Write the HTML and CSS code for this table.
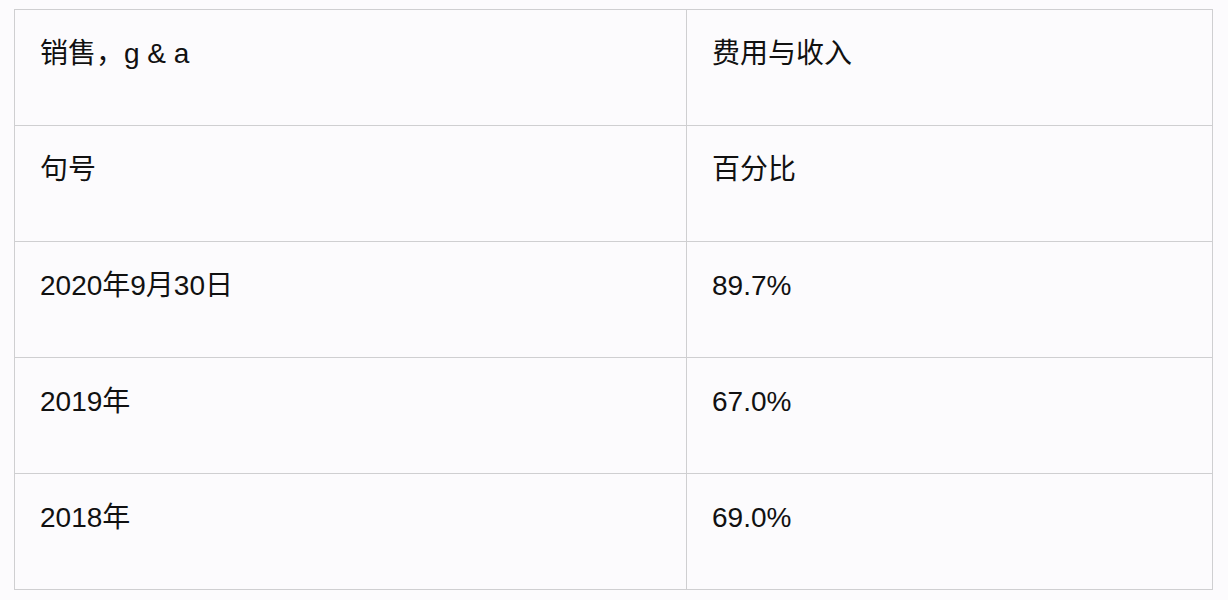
FILE: index.html
```html
<!DOCTYPE html>
<html lang="zh">
<head>
<meta charset="utf-8">
<link rel="stylesheet" href="styles.css">
</head>
<body>
<div class="table">
  <div class="cell">销售，g &amp; a</div>
  <div class="cell">费用与收入</div>
  <div class="cell">句号</div>
  <div class="cell">百分比</div>
  <div class="cell">2020年9月30日</div>
  <div class="cell">89.7%</div>
  <div class="cell">2019年</div>
  <div class="cell">67.0%</div>
  <div class="cell">2018年</div>
  <div class="cell">69.0%</div>
</div>
</body>
</html>
```

FILE: styles.css
```css
html, body {
  margin: 0;
  background: #fcfbfd;
}
body {
  padding: 9px 0 0 14px;
  font-family: "Liberation Sans", "Noto Sans CJK SC", sans-serif;
  font-size: 28px;
  color: #111;
}
.table {
  display: grid;
  grid-template-columns: 672px 526px;
  grid-auto-rows: 116px;
  width: max-content;
  border-top: 1px solid #cfcfd1;
  border-left: 1px solid #cfcfd1;
}
.cell {
  box-sizing: border-box;
  border-right: 1px solid #cfcfd1;
  border-bottom: 1px solid #cfcfd1;
  padding: 23px 0 0 25px;
  line-height: 42px;
}
```
